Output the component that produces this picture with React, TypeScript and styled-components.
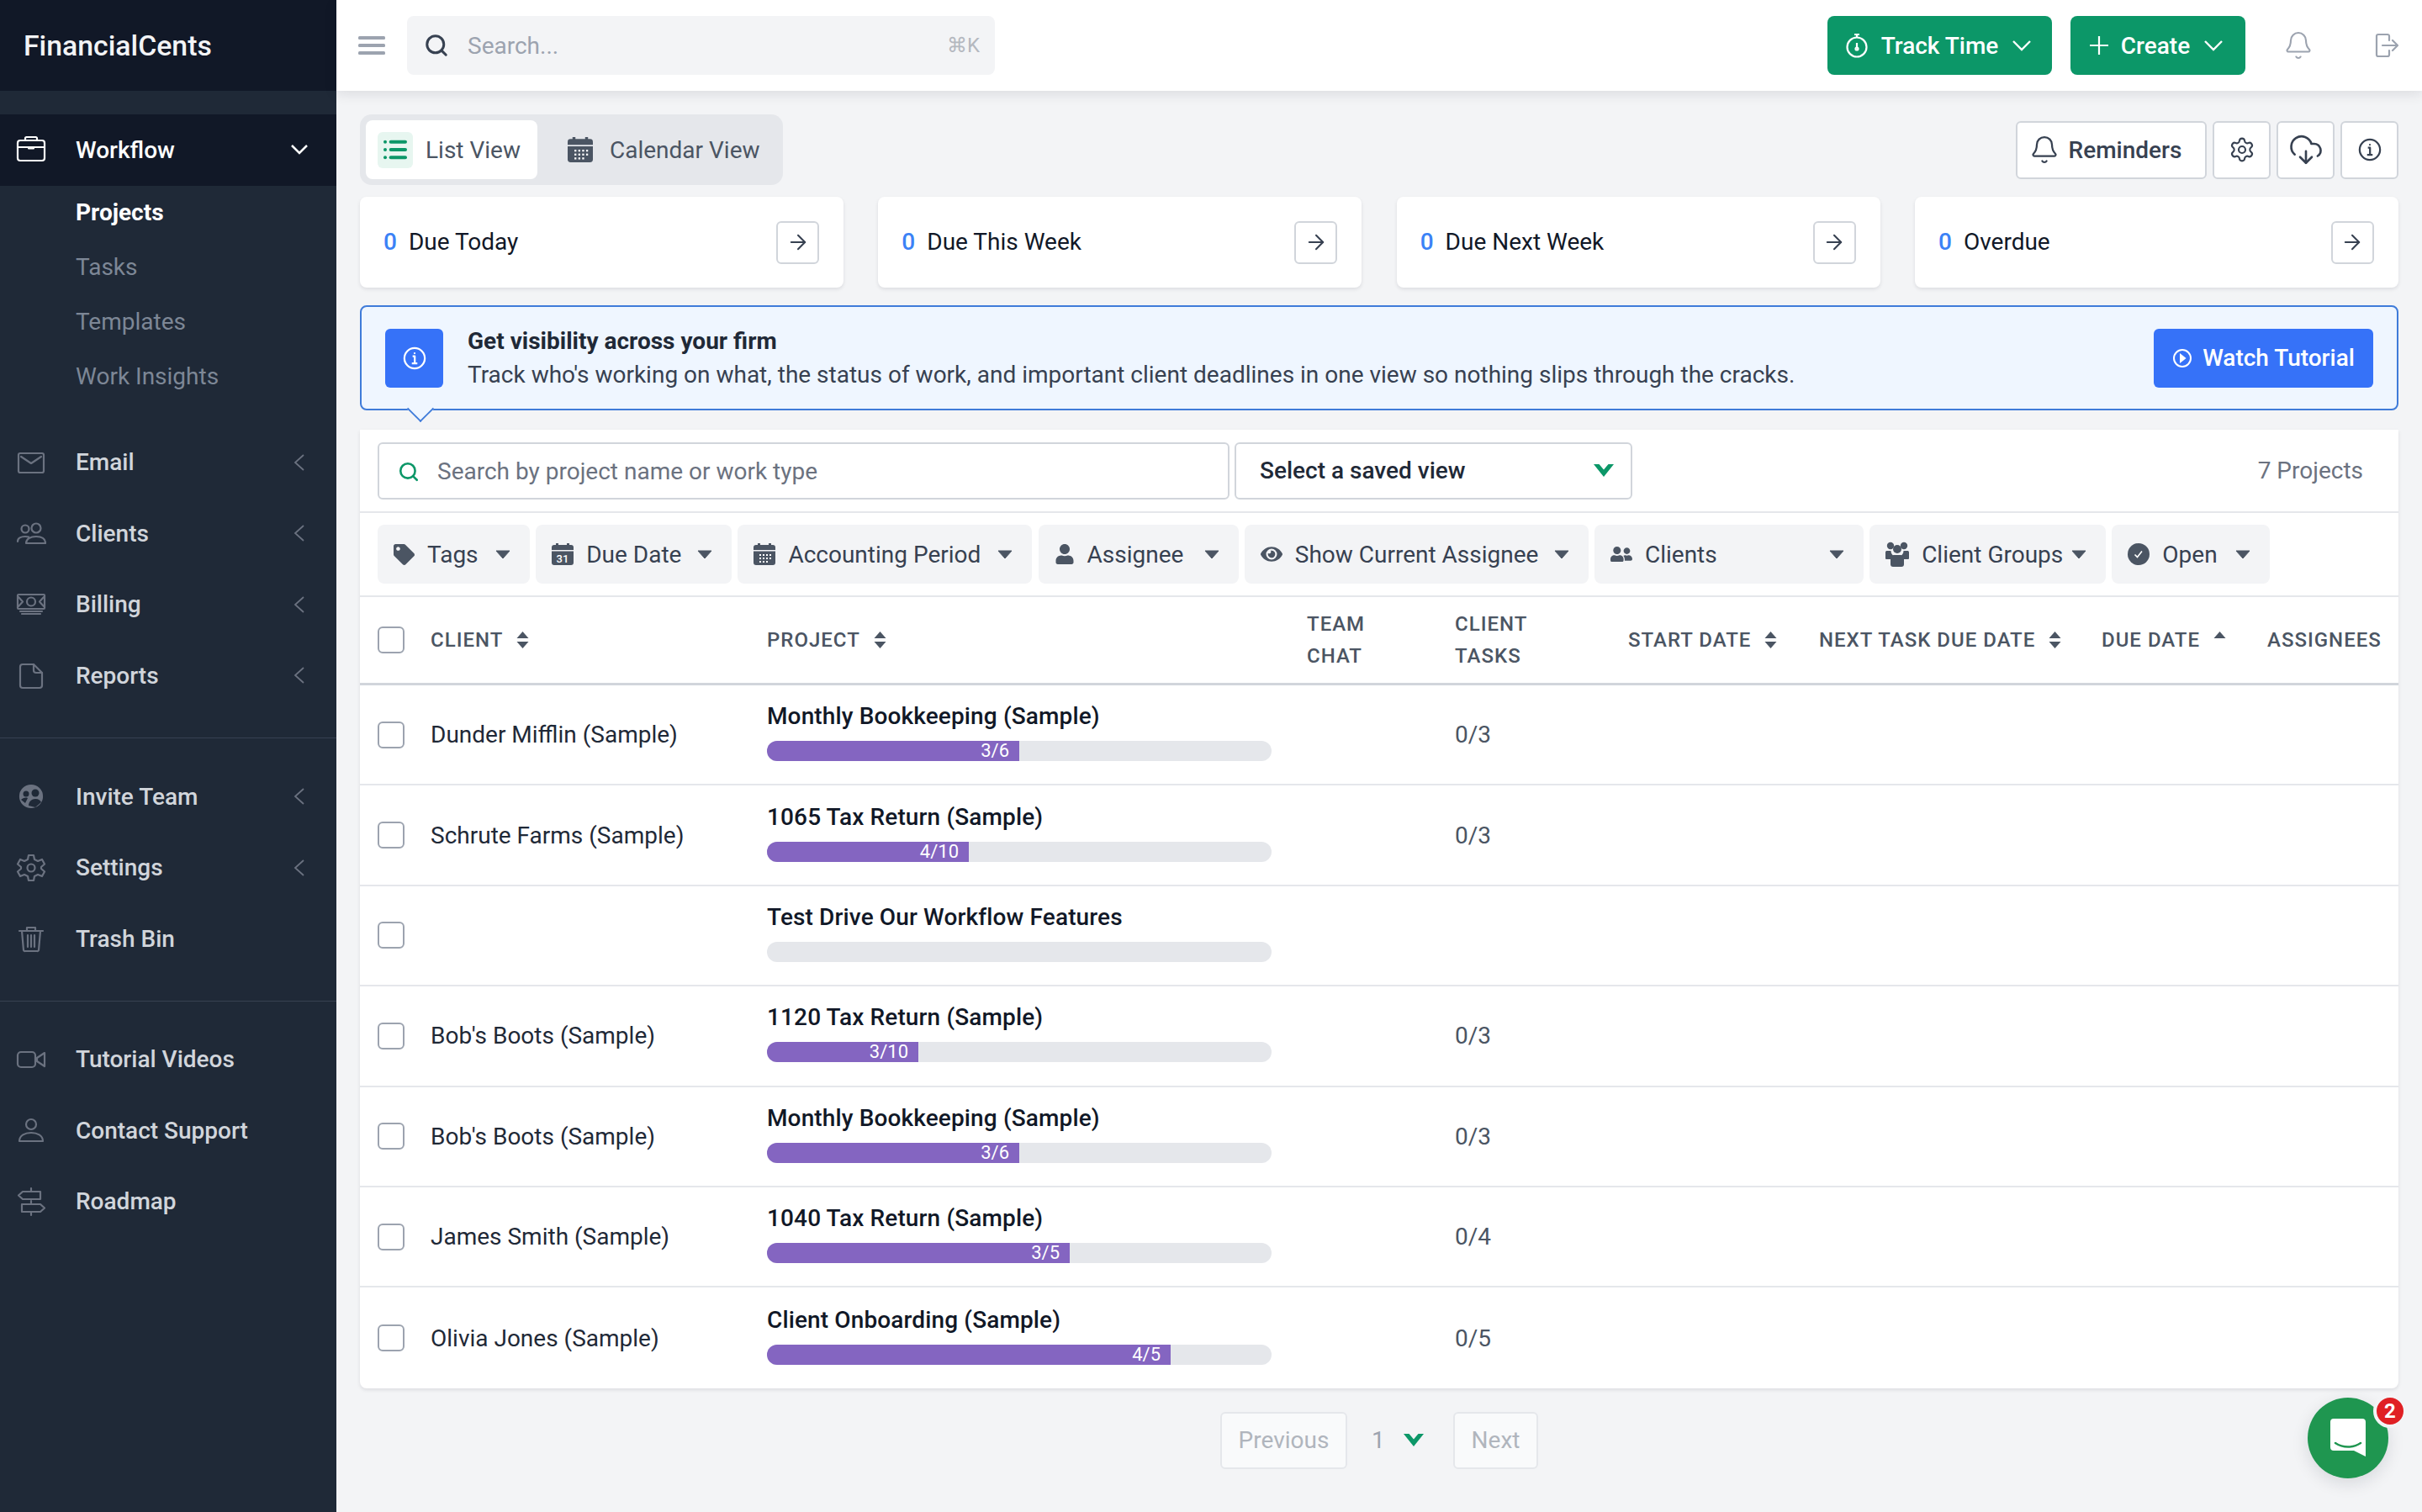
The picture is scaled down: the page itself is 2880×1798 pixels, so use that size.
import React from 'react'
import styled, { createGlobalStyle } from 'styled-components'
import { FaEye, FaTag, FaUser, FaUserFriends } from 'react-icons/fa'
import { ArrowRight, Bell, CloudDownload, List, Search, Settings } from 'lucide-react'

const GlobalStyle = createGlobalStyle`
  html, body {
    margin: 0;
    height: 100%;
    overflow: hidden;
    background: #f3f4f6;
    font-family: Roboto, 'Liberation Sans', sans-serif;
  }
  * { box-sizing: border-box; }
`

const Shell = styled.div`
  display: flex;
  width: 2880px;
  height: 1798px;
  position: relative;
`

/* sidebar */
const Sidebar = styled.aside`
  width: 400px;
  flex: none;
  background: #1f2937;
  display: flex;
  flex-direction: column;
`
const Logo = styled.div`
  height: 108px;
  background: #111827;
  color: #f3f4f6;
  font-size: 33.8px;
  font-weight: 500;
  padding-left: 28px;
  display: flex;
  align-items: center;
  margin-bottom: 28px;
`
const NavRow = styled.div<{ $active?: boolean }>`
  height: 84.6px;
  display: flex;
  align-items: center;
  padding-left: 19px;
  font-size: 28px;
  font-weight: 500;
  color: ${(p) => (p.$active ? '#fff' : '#d1d5db')};
  background: ${(p) => (p.$active ? '#111827' : 'transparent')};
  svg.nav-icon {
    width: 36px;
    height: 36px;
    flex: none;
    margin-right: 35px;
    fill: none;
    stroke: ${(p) => (p.$active ? '#fff' : '#6b7280')};
    stroke-width: 2.2;
    stroke-linejoin: round;
    stroke-linecap: round;
  }
`
const NavChevron = styled.svg<{ $right: number }>`
  margin-left: auto;
  margin-right: ${(p) => p.$right}px;
  fill: none;
  stroke: currentColor;
`
const SubList = styled.div`
  padding-bottom: 28px;
`
const SubItem = styled.div<{ $active?: boolean }>`
  height: 64.7px;
  display: flex;
  align-items: center;
  padding-left: 90px;
  font-size: 28px;
  font-weight: ${(p) => (p.$active ? 700 : 400)};
  color: ${(p) => (p.$active ? '#fff' : '#7d8796')};
`
const NavGroup = styled.div<{ $divider?: boolean }>`
  padding-bottom: ${(p) => (p.$divider ? '31px' : '0')};
  margin-bottom: ${(p) => (p.$divider ? '27px' : '0')};
  border-bottom: ${(p) => (p.$divider ? '1px solid #374151' : 'none')};
`

/* top bar */
const Main = styled.div`
  flex: 1;
  min-width: 0;
  display: flex;
  flex-direction: column;
`
const TopBar = styled.header`
  height: 108px;
  flex: none;
  background: #fff;
  display: flex;
  align-items: center;
  padding: 0 28px 0 26px;
  box-shadow: 0 4px 14px rgba(17, 24, 39, 0.1);
  position: relative;
`
const Burger = styled.svg`
  width: 32px;
  height: 22px;
  flex: none;
  margin-right: 26px;
`
const GlobalSearch = styled.div`
  width: 699px;
  height: 70px;
  background: #f3f4f6;
  border-radius: 8px;
  display: flex;
  align-items: center;
  padding: 0 18px 0 20px;
  font-size: 28px;
  color: #9ca3af;
  gap: 22px;
  svg { color: #374151; flex: none; }
`
const Kbd = styled.span`
  margin-left: auto;
  font-size: 24px;
  color: #b4b8bf;
`
const GreenButton = styled.button<{ $w: number }>`
  width: ${(p) => p.$w}px;
  height: 70px;
  background: #0c9768;
  color: #fff;
  border: none;
  border-radius: 8px;
  font: 500 28px Roboto, sans-serif;
  display: flex;
  align-items: center;
  justify-content: center;
  gap: 15px;
  padding: 0 4px 0 0;
`
const TopActions = styled.div`
  margin-left: auto;
  display: flex;
  align-items: center;
  gap: 22px;
`
const TopIcons = styled.div`
  display: flex;
  align-items: center;
  gap: 73px;
  margin-left: 23px;
  color: #9ca3af;
`

/* content */
const Content = styled.main`
  padding: 28px 28px 0;
  display: flex;
  flex-direction: column;
`
const Toolbar = styled.div`
  height: 84px;
  display: flex;
  align-items: center;
  justify-content: space-between;
  margin-bottom: 14px;
`
const Tabs = styled.div`
  width: 503px;
  height: 84px;
  background: #e5e7eb;
  border-radius: 14px;
  padding: 7px;
  display: flex;
`
const Tab = styled.div<{ $active?: boolean; $w: number }>`
  width: ${(p) => p.$w}px;
  background: ${(p) => (p.$active ? '#fff' : 'transparent')};
  border-radius: 8px;
  display: flex;
  align-items: center;
  padding-left: ${(p) => (p.$active ? '14px' : '36px')};
  gap: ${(p) => (p.$active ? '15px' : '20px')};
  font-size: 28px;
  color: #4b5563;
`
const ListTile = styled.span`
  width: 42px;
  height: 43px;
  border-radius: 6px;
  background: #e7f6f0;
  color: #0c9768;
  display: flex;
  align-items: center;
  justify-content: center;
`
const ToolActions = styled.div`
  display: flex;
  gap: 7px;
`
const OutlineButton = styled.button`
  width: 69px;
  height: 69px;
  background: #fff;
  border: 2px solid #d1d5db;
  border-radius: 6px;
  color: #374151;
  font: 500 28px Roboto, sans-serif;
  display: flex;
  align-items: center;
  justify-content: center;
  padding: 0;
`
const RemindersButton = styled(OutlineButton)`
  width: 227px;
  gap: 11px;
  padding-right: 14px;
`
const CardGrid = styled.div`
  display: grid;
  grid-template-columns: repeat(4, 575px);
  justify-content: space-between;
  margin-bottom: 21px;
`
const DueCard = styled.div`
  height: 108px;
  background: #fff;
  border-radius: 8px;
  box-shadow: 0 2px 4px rgba(17, 24, 39, 0.1);
  display: flex;
  align-items: center;
  padding: 0 29px 0 28px;
  font-size: 28px;
  color: #111827;
`
const Count = styled.span`
  color: #3b82f6;
  font-weight: 500;
  margin-right: 14px;
  position: relative;
  top: -1px;
`
const CardLabel = styled.span`
  position: relative;
  top: -1px;
`
const ArrowBox = styled.span`
  margin-left: auto;
  width: 51px;
  height: 51px;
  border: 2px solid #d1d5db;
  border-radius: 6px;
  color: #374151;
  display: flex;
  align-items: center;
  justify-content: center;
`
const Banner = styled.section`
  height: 125px;
  position: relative;
  background: #eff6ff;
  border: 2px solid #3f7bd9;
  border-radius: 8px;
  display: flex;
  align-items: center;
  padding: 0 28px;
  margin-bottom: 23px;
  &::after {
    content: '';
    position: absolute;
    left: 58px;
    bottom: -12px;
    width: 22px;
    height: 22px;
    background: #eff6ff;
    border-right: 2px solid #3f7bd9;
    border-bottom: 2px solid #3f7bd9;
    transform: rotate(45deg) scale(0.95);
  }
`
const BannerIcon = styled.div`
  width: 69px;
  height: 70px;
  flex: none;
  background: #3672f8;
  border-radius: 6px;
  color: #fff;
  display: flex;
  align-items: center;
  justify-content: center;
  margin-right: 29px;
`
const BannerText = styled.div`
  display: flex;
  flex-direction: column;
  gap: 7px;
  font-size: 28px;
  line-height: 33px;
  color: #374151;
  strong {
    font-weight: 700;
    color: #1f2937;
  }
`
const BlueButton = styled.button`
  margin-left: auto;
  width: 261px;
  height: 70px;
  background: #3672f8;
  border: none;
  border-radius: 6px;
  color: #fff;
  font: 500 28px Roboto, sans-serif;
  display: flex;
  align-items: center;
  justify-content: center;
  gap: 12px;
`

/* table */
const TableCard = styled.section`
  background: #fff;
  border-radius: 0 0 8px 8px;
  box-shadow: 0 2px 4px rgba(17, 24, 39, 0.1);
`
const SearchRow = styled.div`
  height: 99px;
  display: flex;
  align-items: center;
  padding: 0 42px 0 21px;
  gap: 6px;
  border-bottom: 2px solid #e5e7eb;
`
const SearchField = styled.div`
  width: 1013px;
  height: 68px;
  border: 2px solid #d1d5db;
  border-radius: 6px;
  display: flex;
  align-items: center;
  padding: 2px 0 0 22px;
  gap: 21px;
  font-size: 28px;
  color: #6b7280;
  svg { color: #0c9768; flex: none; }
`
const GreenChevron = styled.svg`
  width: 24px;
  height: 15px;
  flex: none;
  fill: #0c9768;
`
const SavedView = styled.div`
  width: 473px;
  height: 68px;
  border: 2px solid #d1d5db;
  border-radius: 6px;
  display: flex;
  align-items: center;
  justify-content: space-between;
  padding: 0 20px 0 28px;
  font-size: 28px;
  font-weight: 500;
  color: #1f2937;
`
const ProjectCount = styled.span`
  margin-left: auto;
  font-size: 28px;
  color: #6b7280;
`
const FilterRow = styled.div`
  height: 100px;
  display: flex;
  align-items: center;
  padding-left: 21px;
  gap: 7.2px;
  border-bottom: 2px solid #e5e7eb;
`
const Chip = styled.div<{ $w: number }>`
  width: ${(p) => p.$w}px;
  height: 70px;
  background: #f3f4f6;
  border-radius: 8px;
  display: flex;
  align-items: center;
  padding: 0 23px 0 19px;
  font-size: 28px;
  color: #374151;
  > svg:first-child {
    flex: none;
    color: #4b5563;
    fill: #4b5563;
  }
`
const ChipLabel = styled.span`
  margin-left: 15px;
  white-space: nowrap;
`
const Caret = styled.svg`
  width: 18px;
  height: 11px;
  margin-left: auto;
  flex: none;
  fill: #4b5563;
  stroke: #4b5563;
  stroke-linejoin: round;
`
const gridColumns = '63px 400px 642px 176px 206px 227px 336px 197px 1fr'
const HeadRow = styled.div`
  height: 105px;
  display: grid;
  grid-template-columns: ${gridColumns};
  align-items: center;
  padding-left: 21px;
  border-bottom: 3px solid #d1d5db;
`
const HeadCell = styled.div`
  display: flex;
  align-items: center;
  gap: 16px;
  font-size: 24px;
  font-weight: 500;
  letter-spacing: 1px;
  line-height: 38px;
  color: #4b5563;
  text-transform: uppercase;
  white-space: nowrap;
`
const StackedHead = styled(HeadCell)`
  display: block;
`
const Check = styled.span`
  display: block;
  width: 32px;
  height: 32px;
  border: 2px solid #9ca3af;
  border-radius: 6px;
  background: #fff;
`
const ProjectRow = styled.div`
  height: 119.4px;
  display: grid;
  grid-template-columns: ${gridColumns};
  align-items: center;
  padding-left: 21px;
  border-bottom: 2px solid #e5e7eb;
  font-size: 28px;
  color: #1f2937;
  &:last-child { border-bottom: none; }
`
const ProjectCell = styled.div`
  margin-bottom: 7px;
`
const ProjectTitle = styled.div`
  font-weight: 500;
  letter-spacing: 0.13px;
  color: #111827;
  line-height: 33px;
  margin-bottom: 13px;
`
const Bar = styled.div`
  width: 600px;
  height: 24px;
  background: #e5e7eb;
  border-radius: 12px;
  overflow: hidden;
`
const BarFill = styled.div`
  height: 100%;
  background: #8465c1;
  color: #fff;
  font-size: 22px;
  line-height: 24px;
  text-align: right;
  padding-right: 12px;
`
const TaskCount = styled.div`
  color: #4b5563;
`

/* pagination and chat */
const Pager = styled.nav`
  display: flex;
  align-items: center;
  justify-content: center;
  margin-top: 28px;
  font-size: 28px;
  color: #9ca3af;
`
const PageButton = styled.div<{ $w: number }>`
  width: ${(p) => p.$w}px;
  height: 68px;
  background: #f9fafb;
  border: 2px solid #e5e7eb;
  border-radius: 6px;
  color: #b0b5bd;
  display: flex;
  align-items: center;
  justify-content: center;
`
const PageSelect = styled.div`
  width: 126px;
  display: flex;
  align-items: center;
  padding-left: 29px;
  gap: 22px;
`
const ChatBubble = styled.div`
  position: absolute;
  left: 2744px;
  top: 1662px;
  width: 96px;
  height: 96px;
  border-radius: 50%;
  background: #1f9650;
  display: flex;
  align-items: center;
  justify-content: center;
  box-shadow: 0 6px 20px rgba(17, 24, 39, 0.12);
`
const ChatBadge = styled.span`
  position: absolute;
  left: 78px;
  top: -4px;
  width: 40px;
  height: 40px;
  border-radius: 50%;
  background: #e02024;
  border: 4px solid #f3f4f6;
  color: #fff;
  font-size: 24px;
  font-weight: 700;
  display: flex;
  align-items: center;
  justify-content: center;
`

const CalendarIcon = ({ size = 26, color = '#4b5563', day }: { size?: number; color?: string; day?: string }) => (
  <svg width={size} height={size} viewBox="0 0 26 26">
    <rect x="5" y="0" width="3" height="5" fill={color} />
    <rect x="18" y="0" width="3" height="5" fill={color} />
    <path d="M0 5a3 3 0 0 1 3-3h20a3 3 0 0 1 3 3v3H0z" fill={color} />
    <path d="M0 9.5h26V23a3 3 0 0 1-3 3H3a3 3 0 0 1-3-3z" fill={color} />
    {day ? (
      <text x="13" y="23" textAnchor="middle" fontSize="13" fontWeight="500" fontFamily="Roboto" fill="#fff">
        {day}
      </text>
    ) : (
      <g fill="#fff">
        {[13, 17, 21].map((y) =>
          [7, 11, 15, 19].map((x) => (y === 21 && x === 19 ? null : <rect key={`${x}-${y}`} x={x} y={y} width="2" height="2" />)),
        )}
      </g>
    )}
  </svg>
)

const InfoIcon = ({ size = 30 }: { size?: number }) => (
  <svg width={size} height={size} viewBox="0 0 30 30" fill="none" stroke="currentColor" strokeWidth="2.4">
    <circle cx="15" cy="15" r="13" />
    <circle cx="15" cy="8.6" r="1.2" fill="currentColor" stroke="none" />
    <path d="M12.5 12.5H15.2V21M11.5 21.5H18.5" strokeLinejoin="round" />
  </svg>
)

const CheckCircle = () => (
  <svg width="26" height="26" viewBox="0 0 26 26">
    <circle cx="13" cy="13" r="13" fill="#4b5563" />
    <path d="M8.5 13.5l3 3 5.5-7" fill="none" stroke="#fff" strokeWidth="1.6" />
  </svg>
)

const GroupIcon = () => (
  <svg width="28" height="30" viewBox="0 0 28 30">
    <circle cx="6" cy="5" r="4.200" />
    <circle cx="22" cy="5" r="4.200" />
    <circle cx="14" cy="9" r="5" />
    <path d="M1 11h5.500c0 2.500 1.200 4.500 2.500 5.500-1.500 1-2.500 2.500-3 4.500H1a1 1 0 0 1-1-1v-6a3 3 0 0 1 1-3zM27 11h-5.500c0 2.500-1.200 4.500-2.500 5.500 1.500 1 2.500 2.500 3 4.500h5a1 1 0 0 0 1-1v-6a3 3 0 0 0-1-3z" />
    <path d="M10 16h8a4 4 0 0 1 4 4v7a3 3 0 0 1-3 3H9a3 3 0 0 1-3-3v-7a4 4 0 0 1 4-4z" />
  </svg>
)

const SortIcon = ({ up }: { up?: boolean }) => (
  <svg width="15" height="20" viewBox="0 0 15 20" fill="#4b5563">
    <path d="M7.5 0L14.5 8H.5z" />
    {!up && <path d="M7.5 20L.5 12h14z" />}
  </svg>
)

const ButtonChevron = () => (
  <svg width="24" height="13" viewBox="0 0 24 13" fill="none" stroke="#fff" strokeWidth="2.400">
    <path d="M3 1l10 10L23 1" />
  </svg>
)

const BoldChevron = () => (
  <GreenChevron viewBox="0 0 24 15">
    <path d="M0 0h6.500L12 6.500 17.500 0H24L12 15z" />
  </GreenChevron>
)

const navIcons: Record<string, React.ReactNode> = {
  Workflow: (
    <>
      <rect x="2" y="7" width="32" height="24" rx="3" />
      <path d="M11 7V4.5A1.5 1.5 0 0 1 12.500 3h11A1.500 1.500 0 0 1 25 4.500V7M2 15h13M21 15h13" />
      <path d="M14 14h8v2.500a1 1 0 0 1-1 1h-6a1 1 0 0 1-1-1z" fill="#fff" stroke="none" />
    </>
  ),
  Email: (
    <>
      <rect x="3" y="7" width="30" height="23" rx="2" />
      <path d="M6 11l12 8 12-8" />
    </>
  ),
  Clients: (
    <>
      <circle cx="11" cy="13" r="4.500" />
      <circle cx="24" cy="12" r="5.500" />
      <path d="M2 28c0-4 4-6 9-6 1.500 0 3 .2 4 .6M12 30c0-5 5-8 12-8s11 3 11 8z" />
    </>
  ),
  Billing: (
    <>
      <rect x="2" y="6" width="32" height="17" rx="1" />
      <circle cx="18" cy="14.500" r="5" />
      <path d="M3 9l5 5.500-5 5.500M33 9l-5 5.500 5 5.500M5 26h26M7 29h22" />
    </>
  ),
  Reports: (
    <>
      <path d="M8 5h13l10 10v15a3 3 0 0 1-3 3H8a3 3 0 0 1-3-3V8a3 3 0 0 1 3-3z" />
      <path d="M21 5v7a3 3 0 0 0 3 3h7" />
    </>
  ),
  'Invite Team': (
    <>
      <circle cx="18" cy="18" r="13" fill="#6b7280" />
      <circle cx="12" cy="15" r="3.500" fill="#1f2937" stroke="none" />
      <circle cx="23" cy="14" r="4.500" fill="#1f2937" stroke="none" />
      <path d="M6 22c2-2 5-3 8-2l-3 6M15 29c0-5 4-8 8-8s6 2 7 4l-7 6z" fill="#1f2937" stroke="none" />
    </>
  ),
  Settings: (
    <>
      <circle cx="18" cy="18" r="4.500" />
      <path d="M15 3h6l1 5 4 2 5-2 3 5.500-4 3.500v2l4 3.500-3 5.500-5-2-4 2-1 5h-6l-1-5-4-2-5 2-3-5.500 4-3.500v-2l-4-3.500L5 8l5 2 4-2z" />
    </>
  ),
  'Trash Bin': (
    <>
      <path d="M4 9h28M13 9V5h10v4M7 9l2 23a2 2 0 0 0 2 1h14a2 2 0 0 0 2-1l2-23" />
      <path d="M14 14v14M18 14v14M22 14v14" />
    </>
  ),
  'Tutorial Videos': (
    <>
      <rect x="2" y="9" width="21" height="18" rx="4" />
      <path d="M34 10l-9 6v4l9 6z" />
    </>
  ),
  'Contact Support': (
    <>
      <circle cx="18" cy="11" r="6" />
      <path d="M4 31c0-7 7-10 14-10s14 3 14 10z" />
    </>
  ),
  Roadmap: (
    <>
      <path d="M18 2v4M18 17v4M18 30v4" />
      <path d="M8 6h21v9H8l-5-4.500zM7 21h22l5 4.500-5 4.500H7z" />
    </>
  ),
}

const NavItem = ({ label, hasMenu }: { label: string; hasMenu?: boolean }) => (
  <NavRow>
    <svg className="nav-icon" viewBox="0 0 36 36">
      {navIcons[label]}
    </svg>
    {label}
    {hasMenu && (
      <NavChevron $right={37} width="14" height="22" viewBox="0 0 14 22" strokeWidth="1.800" color="#6b7280">
        <path d="M12 2L2 11l10 9" />
      </NavChevron>
    )}
  </NavRow>
)

const filters: { label: string; w: number; icon: React.ReactNode }[] = [
  { label: 'Tags', w: 181, icon: <FaTag size={25} /> },
  { label: 'Due Date', w: 233, icon: <CalendarIcon day="31" /> },
  { label: 'Accounting Period', w: 350, icon: <CalendarIcon /> },
  { label: 'Assignee', w: 238, icon: <FaUser size={24} /> },
  { label: 'Show Current Assignee', w: 409, icon: <FaEye size={26} /> },
  { label: 'Clients', w: 320, icon: <FaUserFriends size={26} /> },
  { label: 'Client Groups', w: 281, icon: <GroupIcon /> },
  { label: 'Open', w: 188, icon: <CheckCircle /> },
]

const projects = [
  { client: 'Dunder Mifflin (Sample)', title: 'Monthly Bookkeeping (Sample)', done: 3, total: 6, tasks: '0/3' },
  { client: 'Schrute Farms (Sample)', title: '1065 Tax Return (Sample)', done: 4, total: 10, tasks: '0/3' },
  { client: '', title: 'Test Drive Our Workflow Features', done: 0, total: 0, tasks: '' },
  { client: "Bob's Boots (Sample)", title: '1120 Tax Return (Sample)', done: 3, total: 10, tasks: '0/3' },
  { client: "Bob's Boots (Sample)", title: 'Monthly Bookkeeping (Sample)', done: 3, total: 6, tasks: '0/3' },
  { client: 'James Smith (Sample)', title: '1040 Tax Return (Sample)', done: 3, total: 5, tasks: '0/4' },
  { client: 'Olivia Jones (Sample)', title: 'Client Onboarding (Sample)', done: 4, total: 5, tasks: '0/5' },
]

const App = () => (
  <Shell>
    <GlobalStyle />
    <Sidebar>
      <Logo>FinancialCents</Logo>
      <NavRow $active>
        <svg className="nav-icon" viewBox="0 0 36 36">
          {navIcons.Workflow}
        </svg>
        Workflow
        <NavChevron $right={33} width="22" height="14" viewBox="0 0 22 14" strokeWidth="2.500">
          <path d="M2 2l9 9 9-9" />
        </NavChevron>
      </NavRow>
      <SubList>
        <SubItem $active>Projects</SubItem>
        <SubItem>Tasks</SubItem>
        <SubItem>Templates</SubItem>
        <SubItem>Work Insights</SubItem>
      </SubList>
      <NavGroup $divider>
        <NavItem label="Email" hasMenu />
        <NavItem label="Clients" hasMenu />
        <NavItem label="Billing" hasMenu />
        <NavItem label="Reports" hasMenu />
      </NavGroup>
      <NavGroup $divider>
        <NavItem label="Invite Team" hasMenu />
        <NavItem label="Settings" hasMenu />
        <NavItem label="Trash Bin" />
      </NavGroup>
      <NavGroup>
        <NavItem label="Tutorial Videos" />
        <NavItem label="Contact Support" />
        <NavItem label="Roadmap" />
      </NavGroup>
    </Sidebar>
    <Main>
      <TopBar>
        <Burger viewBox="0 0 32 22" fill="#9ca3af">
          <rect width="32" height="4" rx="1.500" />
          <rect y="9" width="32" height="4" rx="1.500" />
          <rect y="18" width="32" height="4" rx="1.500" />
        </Burger>
        <GlobalSearch>
          <Search size={30} strokeWidth={2.4} />
          Search...
          <Kbd>⌘K</Kbd>
        </GlobalSearch>
        <TopActions>
          <GreenButton $w={267}>
            <svg width="28" height="30" viewBox="0 0 28 30" fill="none" stroke="#fff" strokeWidth="2.200">
              <circle cx="14" cy="17" r="11.500" />
              <path d="M11 2h6M14 2v3M14 12v6" />
              <circle cx="14" cy="19" r="1.500" />
            </svg>
            Track Time
            <ButtonChevron />
          </GreenButton>
          <GreenButton $w={208}>
            <svg width="22" height="22" viewBox="0 0 22 22" fill="none" stroke="#fff" strokeWidth="2.200">
              <path d="M11 0v22M0 11h22" />
            </svg>
            Create
            <ButtonChevron />
          </GreenButton>
          <TopIcons>
            <Bell size={36} strokeWidth={1.400} />
            <svg width="28" height="30" viewBox="0 0 28 30" fill="none" stroke="currentColor" strokeWidth="2.200" strokeLinejoin="round" strokeLinecap="round">
              <path d="M17 9V4a2 2 0 0 0-2-2H4a2 2 0 0 0-2 2v22a2 2 0 0 0 2 2h11a2 2 0 0 0 2-2v-5" />
              <path d="M9 15h18M21 9l6 6-6 6" />
            </svg>
          </TopIcons>
        </TopActions>
      </TopBar>
      <Content>
        <Toolbar>
          <Tabs>
            <Tab $active $w={204}>
              <ListTile>
                <List size={32} strokeWidth={3} />
              </ListTile>
              List View
            </Tab>
            <Tab $w={284}>
              <CalendarIcon size={30} />
              Calendar View
            </Tab>
          </Tabs>
          <ToolActions>
            <RemindersButton>
              <Bell size={36} strokeWidth={1.500} />
              Reminders
            </RemindersButton>
            <OutlineButton>
              <Settings size={32} strokeWidth={1.600} />
            </OutlineButton>
            <OutlineButton>
              <CloudDownload size={42} strokeWidth={1.500} />
            </OutlineButton>
            <OutlineButton>
              <InfoIcon size={28} />
            </OutlineButton>
          </ToolActions>
        </Toolbar>
        <CardGrid>
          {['Due Today', 'Due This Week', 'Due Next Week', 'Overdue'].map((label) => (
            <DueCard key={label}>
              <Count>0</Count>
              <CardLabel>{label}</CardLabel>
              <ArrowBox>
                <ArrowRight size={28} strokeWidth={1.800} />
              </ArrowBox>
            </DueCard>
          ))}
        </CardGrid>
        <Banner>
          <BannerIcon>
            <InfoIcon size={28} />
          </BannerIcon>
          <BannerText>
            <strong>Get visibility across your firm</strong>
            <span>
              Track who's working on what, the status of work, and important client deadlines in one view so nothing
              slips through the cracks.
            </span>
          </BannerText>
          <BlueButton>
            <svg width="24" height="24" viewBox="0 0 24 24" fill="none" stroke="#fff" strokeWidth="2">
              <circle cx="12" cy="12" r="10" />
              <path d="M10 8l5 4-5 4z" fill="#fff" />
            </svg>
            Watch Tutorial
          </BlueButton>
        </Banner>
        <TableCard>
          <SearchRow>
            <SearchField>
              <Search size={26} strokeWidth={2.400} />
              Search by project name or work type
            </SearchField>
            <SavedView>
              Select a saved view
              <BoldChevron />
            </SavedView>
            <ProjectCount>7 Projects</ProjectCount>
          </SearchRow>
          <FilterRow>
            {filters.map((f) => (
              <Chip key={f.label} $w={f.w}>
                {f.icon}
                <ChipLabel>{f.label}</ChipLabel>
                <Caret viewBox="0 0 18 11">
                  <path d="M1 1h16l-8 9z" />
                </Caret>
              </Chip>
            ))}
          </FilterRow>
          <HeadRow>
            <Check />
            <HeadCell>
              Client <SortIcon />
            </HeadCell>
            <HeadCell>
              Project <SortIcon />
            </HeadCell>
            <StackedHead>
              Team
              <br />
              Chat
            </StackedHead>
            <StackedHead>
              Client
              <br />
              Tasks
            </StackedHead>
            <HeadCell>
              Start Date <SortIcon />
            </HeadCell>
            <HeadCell>
              Next Task Due Date <SortIcon />
            </HeadCell>
            <HeadCell>
              Due Date <SortIcon up />
            </HeadCell>
            <HeadCell>Assignees</HeadCell>
          </HeadRow>
          {projects.map((p) => (
            <ProjectRow key={p.title + p.client}>
              <Check />
              <div>{p.client}</div>
              <ProjectCell>
                <ProjectTitle>{p.title}</ProjectTitle>
                <Bar>
                  {p.total > 0 && (
                    <BarFill style={{ width: `${(p.done / p.total) * 100}%` }}>
                      {p.done}/{p.total}
                    </BarFill>
                  )}
                </Bar>
              </ProjectCell>
              <div />
              <TaskCount>{p.tasks}</TaskCount>
            </ProjectRow>
          ))}
        </TableCard>
        <Pager>
          <PageButton $w={151}>Previous</PageButton>
          <PageSelect>
            1
            <BoldChevron />
          </PageSelect>
          <PageButton $w={101}>Next</PageButton>
        </Pager>
      </Content>
    </Main>
    <ChatBubble>
      <svg width="44" height="48" viewBox="0 0 44 48">
        <path d="M5 1h34a4 4 0 0 1 4 4v41l-14-7H5a4 4 0 0 1-4-4V5a4 4 0 0 1 4-4z" fill="#fff" />
        <path d="M7 30c9 6 21 6 30 0" fill="none" stroke="#1f9650" strokeWidth="2.500" strokeLinecap="round" />
      </svg>
      <ChatBadge>2</ChatBadge>
    </ChatBubble>
  </Shell>
)

export default App
